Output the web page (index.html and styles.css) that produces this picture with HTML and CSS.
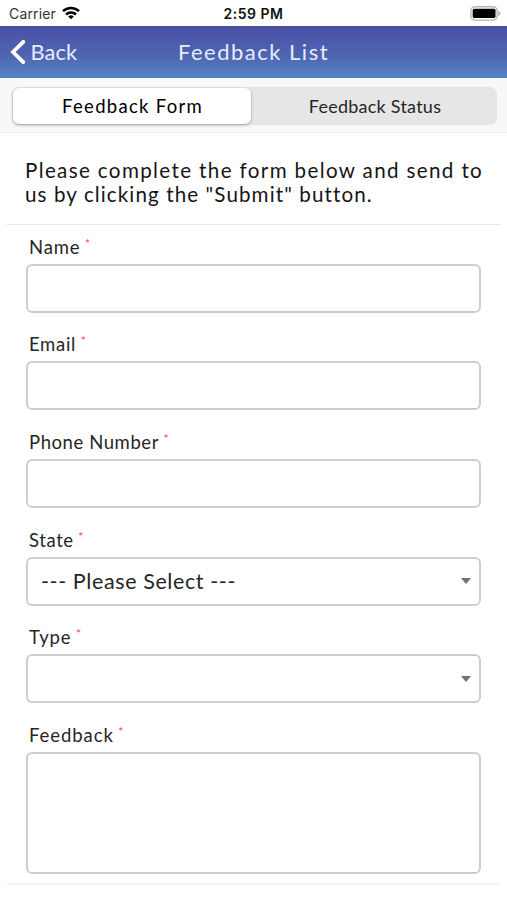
FILE: index.html
```html
<!DOCTYPE html>
<html lang="en">
<head>
<meta charset="utf-8">
<meta name="viewport" content="width=device-width, initial-scale=1">
<title>Feedback List</title>
<link rel="stylesheet" href="styles.css">
</head>
<body>
<div class="status">
  <div class="carrier"><span>Carrier</span>
    <svg width="18" height="14" viewBox="0 0 18 14" fill="none" stroke="#000" stroke-width="2.5"><path d="M1 5.2a11.4 11.4 0 0 1 16 0M4 8.5a7.2 7.2 0 0 1 10 0"/><path d="M9 13.2 6.2 10.6a4.2 4.2 0 0 1 5.6 0z" fill="#000" stroke="none"/></svg>
  </div>
  <div class="time">2:59 PM</div>
  <svg class="battery" width="31" height="15" viewBox="0 0 31 15"><rect x=".9" y=".7" width="26.2" height="13.4" rx="4" fill="#fff" stroke="#b5b5b5" stroke-width="1.4"/><rect x="2.7" y="2.7" width="22.8" height="9.4" rx="1.6" fill="#000"/><path d="M28.4 5v5q2-.7 2-2.5t-2-2.5" fill="#aaa"/></svg>
</div>
<header class="nav">
  <a class="back"><svg width="16" height="26" viewBox="0 0 16 26" fill="none" stroke="#fff" stroke-width="3.8" stroke-linecap="round" stroke-linejoin="miter"><path d="M13.3 2.8 3 13l10.3 10.2"/></svg><span>Back</span></a>
  <h1>Feedback List</h1>
</header>
<div class="tabs"><div class="segment">
  <div class="tab active">Feedback Form</div>
  <div class="tab">Feedback Status</div>
</div></div>
<main>
  <p class="intro"><span class="lead">Please complete the form below and send to</span><br>us by clicking the "Submit" button.</p>
  <form class="form">
    <div class="field"><label><span class="name">Name</span><i>*</i></label><div class="box"></div></div>
    <div class="field"><label><span class="email">Email</span><i>*</i></label><div class="box"></div></div>
    <div class="field"><label><span class="phone">Phone Number</span><i>*</i></label><div class="box"></div></div>
    <div class="field"><label><span class="state">State</span><i>*</i></label><div class="box select"><span>--- Please Select ---</span><b class="arrow"></b></div></div>
    <div class="field"><label><span class="type">Type</span><i>*</i></label><div class="box select"><b class="arrow"></b></div></div>
    <div class="field"><label><span class="feedback">Feedback</span><i>*</i></label><div class="box area"></div></div>
  </form>
</main>
</body>
</html>
```
FILE: styles.css
```css
* { box-sizing: border-box; }
body { margin: 0; width: 507px; height: 900px; overflow: hidden; background: #fff; color: #262626; font-family: Lato, "Open Sans", sans-serif; }
.status { height: 26px; display: grid; grid-template-columns: 1fr auto 1fr; align-items: center; padding: 0 6px 0 9px; font-family: Inter, sans-serif; font-size: 14px; color: #333; }
.carrier { display: flex; align-items: center; gap: 6px; letter-spacing: .15px; }
.time { font-weight: 600; color: #111; letter-spacing: .5px; margin-right: 3px; }
.battery { justify-self: end; }
.nav { height: 52px; display: grid; grid-template-columns: 1fr auto 1fr; align-items: center; padding-bottom: 1px; background: linear-gradient(#4a50a5, #4e64b0 55%, #5584c2); color: #e6ecff; }
.back { display: flex; align-items: center; gap: 4.5px; padding-left: 10px; font-size: 21.8px; letter-spacing: .15px; }
h1 { margin: 0; font-size: 22px; font-weight: 400; letter-spacing: 1.5px; }
.tabs { height: 55px; padding: 9px 10px 8px 12px; background: #f8f8f8; border-bottom: 1px solid #ededed; }
.segment { height: 38px; display: flex; padding: 1px; border-radius: 7px; background: #e6e6e6; }
.tab { flex: 1; display: flex; align-items: center; justify-content: center; padding-left: 3px; font-size: 18px; letter-spacing: .24px; }
.active { flex: none; width: 238px; padding-left: 1px; font-size: 18.5px; letter-spacing: 1.28px; background: #fff; color: #000; border-radius: 6px; box-shadow: 0 1px 3px #999; }
main { padding: 0 7px; }
.intro { margin: 0; height: 92px; padding: 25px 0 0 18px; font-size: 20.6px; line-height: 24.4px; letter-spacing: 1.1px; border-bottom: 1px solid #e5e5e5; color: #151515; white-space: nowrap; }
.lead { letter-spacing: 1.36px; }
.form { padding: 8.5px 19px 8.6px; border-bottom: 2px solid #f5f5f5; display: flex; flex-direction: column; gap: 18.7px; }
label { display: flex; height: 30px; padding-left: 3px; font-size: 18.5px; line-height: 26px; }
label i { margin-left: 4.5px; color: #f44; font-style: normal; font-size: 12px; line-height: 20px; }
.name { letter-spacing: .85px; }
.email { letter-spacing: .7px; }
.phone { letter-spacing: .58px; }
.state { letter-spacing: .6px; }
.type { letter-spacing: .85px; }
.feedback { letter-spacing: .92px; }
.box { height: 49px; border: 2px solid #cecece; border-radius: 6px; }
.area { height: 122px; }
.select { display: flex; align-items: center; padding: 0 8px 0 13px; font-size: 21.5px; line-height: 24px; letter-spacing: .6px; }
.select span { padding-bottom: 1px; }
.arrow { margin-left: auto; border: 5px solid transparent; border-top: 6px solid #707070; border-bottom: 0; }
```
